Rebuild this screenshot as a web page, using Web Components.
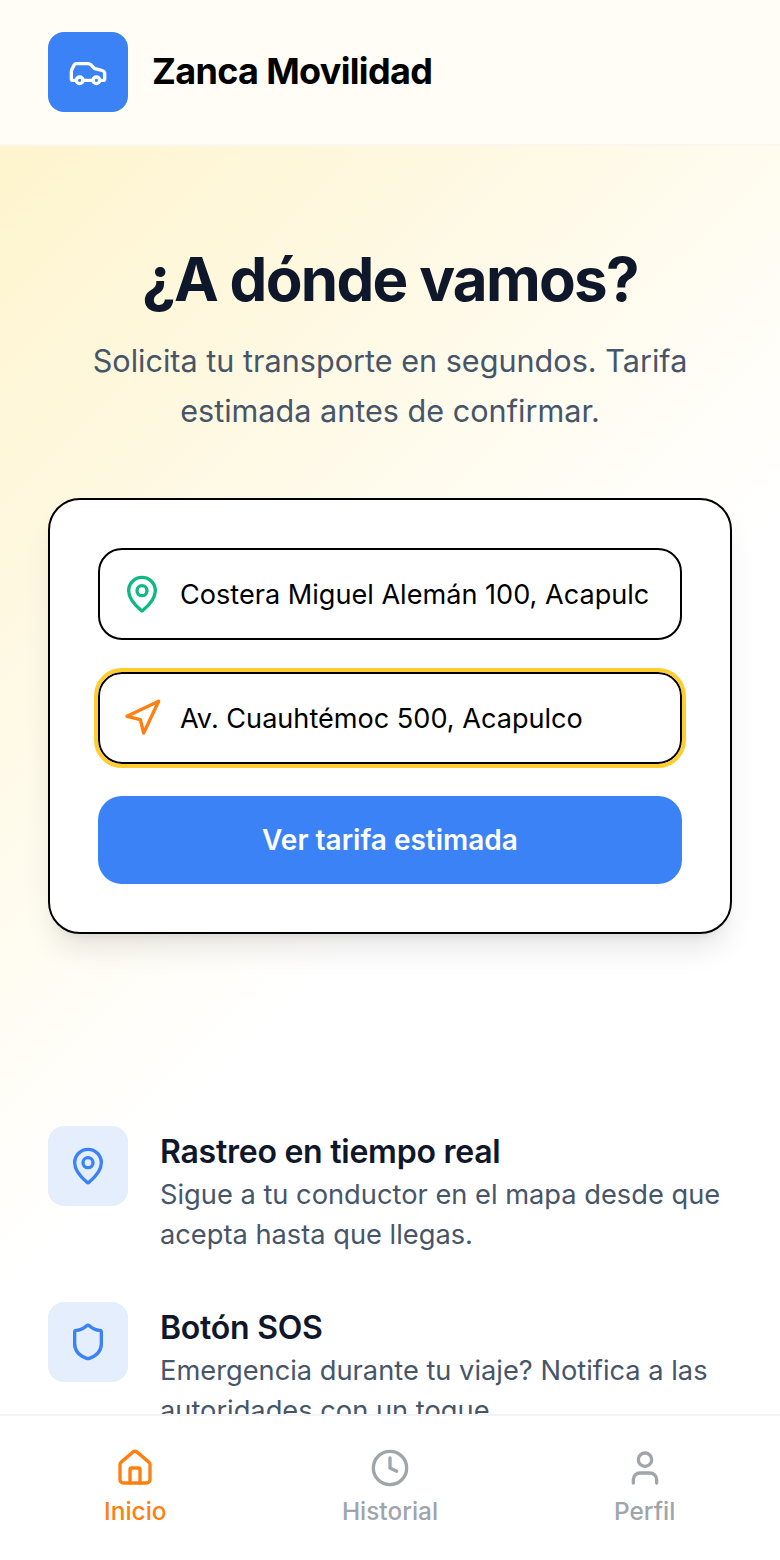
<!DOCTYPE html>
<html lang="es">
<head>
<meta charset="utf-8">
<title>Zanca Movilidad</title>
<style>
  html, body { margin: 0; padding: 0; background: #fff; }
  body { font-family: Inter, "Liberation Sans", sans-serif; }
</style>
</head>
<body>
<zanca-app>
  <app-header slot="header" title="Zanca Movilidad"></app-header>

  <hero-section heading="¿A dónde vamos?">
    Solicita tu transporte en segundos. Tarifa<br>estimada antes de confirmar.
    <route-card slot="card">
      <route-field icon="map-pin" color="#10b981">Costera Miguel Alemán 100, Acapulco</route-field>
      <route-field icon="navigation" color="#ff7f11" focused>Av. Cuauhtémoc 500, Acapulco</route-field>
      <primary-button>Ver tarifa estimada</primary-button>
    </route-card>
  </hero-section>

  <feature-list>
    <feature-row icon="map-pin" heading="Rastreo en tiempo real">Sigue a tu conductor en el mapa desde que acepta hasta que llegas.</feature-row>
    <feature-row icon="shield" heading="Botón SOS">Emergencia durante tu viaje? Notifica a las autoridades con un toque.</feature-row>
  </feature-list>

  <bottom-nav slot="nav">
    <nav-item icon="house" active>Inicio</nav-item>
    <nav-item icon="clock">Historial</nav-item>
    <nav-item icon="user">Perfil</nav-item>
  </bottom-nav>
</zanca-app>

<script>
const ICONS = {
  car: '<path d="M19 17h2c.6 0 1-.4 1-1v-3c0-.9-.7-1.7-1.5-1.9C18.7 10.6 16 10 16 10s-1.3-1.4-2.2-2.3c-.5-.4-1.1-.7-1.8-.7H5c-.6 0-1.1.4-1.4.9l-1.4 2.9A3.7 3.7 0 0 0 2 12v4c0 .6.4 1 1 1h2"/><circle cx="7" cy="17" r="2"/><path d="M9 17h6"/><circle cx="17" cy="17" r="2"/>',
  'map-pin': '<path d="M20 10c0 4.993-5.539 10.193-7.399 11.799a1 1 0 0 1-1.202 0C9.539 20.193 4 14.993 4 10a8 8 0 0 1 16 0"/><circle cx="12" cy="10" r="3"/>',
  navigation: '<polygon points="3 11 22 2 13 21 11 13 3 11"/>',
  shield: '<path d="M20 13c0 5-3.5 7.5-7.66 8.95a1 1 0 0 1-.67-.01C7.5 20.5 4 18 4 13V6a1 1 0 0 1 1-1c2 0 4.5-1.2 6.24-2.72a1.17 1.17 0 0 1 1.52 0C14.51 3.81 17 5 19 5a1 1 0 0 1 1 1z"/>',
  house: '<path d="M15 21v-8a1 1 0 0 0-1-1h-4a1 1 0 0 0-1 1v8"/><path d="M3 10a2 2 0 0 1 .709-1.528l7-5.999a2 2 0 0 1 2.582 0l7 5.999A2 2 0 0 1 21 10v9a2 2 0 0 1-2 2H5a2 2 0 0 1-2-2z"/>',
  clock: '<circle cx="12" cy="12" r="10"/><polyline points="12 6 12 12 16 14"/>',
  user: '<path d="M19 21v-2a4 4 0 0 0-4-4H9a4 4 0 0 0-4 4v2"/><circle cx="12" cy="7" r="4"/>'
};

function iconSvg(name, color) {
  return `<svg width="40" height="40" viewBox="0 0 24 24" fill="none" stroke="${color}" stroke-width="2" stroke-linecap="round" stroke-linejoin="round">${ICONS[name]}</svg>`;
}

class ZancaApp extends HTMLElement {
  constructor() {
    super();
    this.attachShadow({ mode: 'open' });
    this.shadowRoot.innerHTML = `
      <style>
        :host { display: flex; flex-direction: column; width: 780px; height: 1560px; overflow: hidden; background: #fff; }
        main { flex: 1; min-height: 0; overflow: hidden; background: linear-gradient(135deg, #fef4cd 0%, #fff 56%); }
      </style>
      <slot name="header"></slot>
      <main><slot></slot></main>
      <slot name="nav"></slot>
    `;
  }
}

class AppHeader extends HTMLElement {
  constructor() {
    super();
    this.attachShadow({ mode: 'open' });
  }

  connectedCallback() {
    this.shadowRoot.innerHTML = `
      <style>
        :host { display: flex; align-items: center; gap: 24px; padding: 32px 48px; background: #fffdf6; border-bottom: 2px solid #f9f7f0; flex: none; }
        .logo { width: 80px; height: 80px; border-radius: 16px; background: #3b82f6; display: flex; align-items: center; justify-content: center; }
        h1 { margin: -2px 0 0; font-size: 36px; line-height: 40px; font-weight: 700; letter-spacing: -.67px; color: #000; }
      </style>
      <div class="logo">${iconSvg('car', '#fff')}</div>
      <h1>${this.getAttribute('title')}</h1>
    `;
    this.removeAttribute('title');
  }
}

class HeroSection extends HTMLElement {
  constructor() {
    super();
    this.attachShadow({ mode: 'open' });
  }

  connectedCallback() {
    this.shadowRoot.innerHTML = `
      <style>
        :host { display: block; padding: 95px 48px 144px; text-align: center; }
        h2 { margin: 0 0 19px; font-size: 60px; line-height: 76px; font-weight: 700; letter-spacing: -1.7px; color: #0f172a; }
        p { margin: 0 0 62px; font-size: 30.6px; line-height: 50px; color: #475569; }
      </style>
      <h2>${this.getAttribute('heading')}</h2>
      <p><slot></slot></p>
      <slot name="card"></slot>
    `;
  }
}

class RouteCard extends HTMLElement {
  constructor() {
    super();
    this.attachShadow({ mode: 'open' });
    this.shadowRoot.innerHTML = `
      <style>
        :host { display: flex; flex-direction: column; gap: 32px; padding: 48px; background: #fff; border: 2px solid #000; border-radius: 32px; text-align: left;
          box-shadow: 0 20px 30px -6px rgba(0,0,0,.1), 0 8px 12px -8px rgba(0,0,0,.1); }
      </style>
      <slot></slot>
    `;
  }
}

class RouteField extends HTMLElement {
  constructor() {
    super();
    this.attachShadow({ mode: 'open' });
  }

  connectedCallback() {
    this.shadowRoot.innerHTML = `
      <style>
        :host { display: flex; align-items: center; gap: 18px; height: 92px; box-sizing: border-box; padding: 0 32px 0 22px; background: #fff; border: 2px solid #000; border-radius: 24px; }
        :host([focused]) { outline: 4px solid #ffcd2e; outline-offset: 0; }
        svg { flex: none; }
        span { flex: 1; min-width: 0; overflow: hidden; white-space: nowrap; padding-top: 2px; font-size: 27.1px; line-height: 36px; color: #000; }
      </style>
      ${iconSvg(this.getAttribute('icon'), this.getAttribute('color'))}
      <span><slot></slot></span>
    `;
  }
}

class PrimaryButton extends HTMLElement {
  constructor() {
    super();
    this.attachShadow({ mode: 'open' });
    this.shadowRoot.innerHTML = `
      <style>
        :host { display: flex; align-items: center; justify-content: center; height: 88px; background: #3b82f6; border-radius: 24px; color: #fff; font-size: 28px; font-weight: 600; }
      </style>
      <slot></slot>
    `;
  }
}

class FeatureList extends HTMLElement {
  constructor() {
    super();
    this.attachShadow({ mode: 'open' });
    this.shadowRoot.innerHTML = `
      <style>
        :host { display: flex; flex-direction: column; gap: 47px; padding: 48px 48px 0; }
      </style>
      <slot></slot>
    `;
  }
}

class FeatureRow extends HTMLElement {
  constructor() {
    super();
    this.attachShadow({ mode: 'open' });
  }

  connectedCallback() {
    this.shadowRoot.innerHTML = `
      <style>
        :host { display: flex; align-items: flex-start; gap: 32px; }
        .icon { flex: none; width: 80px; height: 80px; border-radius: 16px; background: #e5eefd; display: flex; align-items: center; justify-content: center; }
        h3 { margin: 2px 0 0; font-size: 32px; line-height: 47px; font-weight: 600; letter-spacing: -.25px; color: #0f172a; }
        p { margin: 0; font-size: 27.25px; line-height: 40px; color: #475569; }
      </style>
      <div class="icon">${iconSvg(this.getAttribute('icon'), '#3b82f6')}</div>
      <div>
        <h3>${this.getAttribute('heading')}</h3>
        <p><slot></slot></p>
      </div>
    `;
  }
}

class BottomNav extends HTMLElement {
  constructor() {
    super();
    this.attachShadow({ mode: 'open' });
    this.shadowRoot.innerHTML = `
      <style>
        :host { display: grid; grid-template-columns: repeat(3, 1fr); height: 144px; padding: 0 8px; background: #fff; border-top: 2px solid #f3f4f6; flex: none; }
      </style>
      <slot></slot>
    `;
  }
}

class NavItem extends HTMLElement {
  constructor() {
    super();
    this.attachShadow({ mode: 'open' });
  }

  connectedCallback() {
    const color = this.hasAttribute('active') ? '#ff7f11' : '#a0a4ab';
    this.shadowRoot.innerHTML = `
      <style>
        :host { display: flex; flex-direction: column; align-items: center; gap: 7px; padding-top: 32px; color: ${color}; font-size: 24.4px; line-height: 32px; font-weight: 500; }
      </style>
      ${iconSvg(this.getAttribute('icon'), color)}
      <slot></slot>
    `;
  }
}

customElements.define('zanca-app', ZancaApp);
customElements.define('app-header', AppHeader);
customElements.define('hero-section', HeroSection);
customElements.define('route-card', RouteCard);
customElements.define('route-field', RouteField);
customElements.define('primary-button', PrimaryButton);
customElements.define('feature-list', FeatureList);
customElements.define('feature-row', FeatureRow);
customElements.define('bottom-nav', BottomNav);
customElements.define('nav-item', NavItem);
</script>
</body>
</html>
